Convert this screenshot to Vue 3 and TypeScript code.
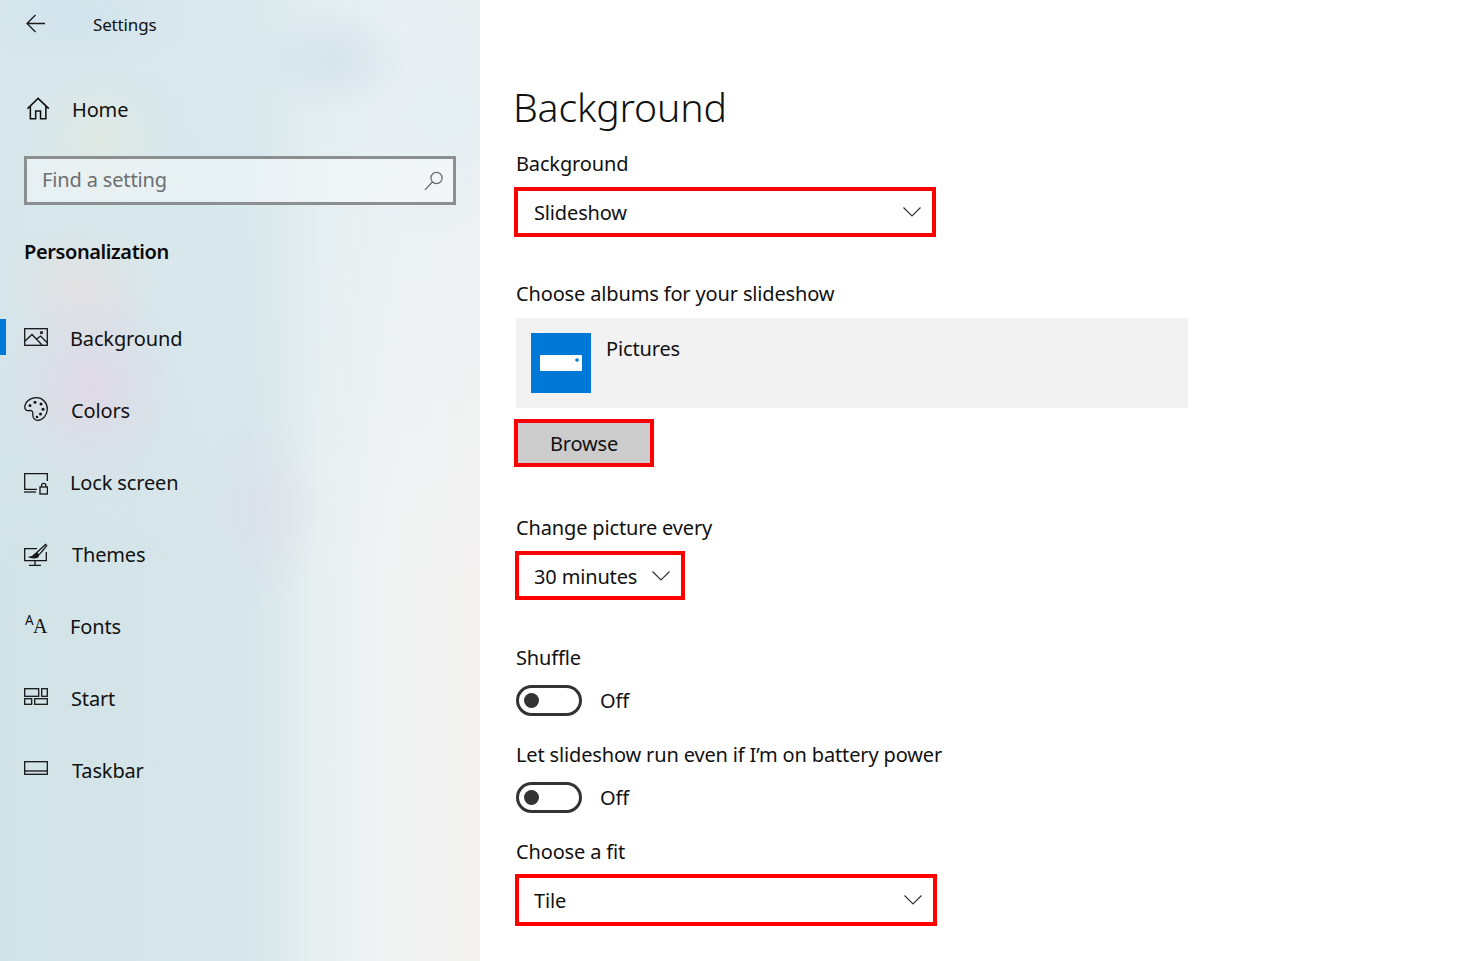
<script setup lang="ts">
const items: { name: string; icon: string; active?: boolean; nudge?: string }[] = [
  { name: 'Background', icon: 'bg', active: true },
  { name: 'Colors', icon: 'colors', nudge: 'n1' },
  { name: 'Lock screen', icon: 'lock' },
  { name: 'Themes', icon: 'themes', nudge: 'n2' },
  { name: 'Fonts', icon: 'fonts' },
  { name: 'Start', icon: 'start', nudge: 'n1' },
  { name: 'Taskbar', icon: 'taskbar', nudge: 'n2' },
]
</script>

<template>
  <div class="page">
    <aside class="side">
      <div class="top">
        <svg class="back" width="20" height="20" viewBox="0 0 20 20" fill="none" stroke="#1a1a1a" stroke-width="1.3">
          <path d="M1 9.5H19M9.5 1L1 9.5L9.5 18" />
        </svg>
        <span class="app-title">Settings</span>
      </div>
      <div class="home">
        <svg width="24" height="24" viewBox="0 0 24 24" fill="none" stroke="#111" stroke-width="1.6">
          <path d="M2 12.5L13 2L24 12.5M5 10V23H10.5V15H15.5V23H21V10" transform="translate(-1.5 -0.5) scale(0.97)" />
        </svg>
        <span>Home</span>
      </div>
      <div class="search">
        <span>Find a setting</span>
        <svg width="20" height="20" viewBox="0 0 20 20" fill="none" stroke="#666" stroke-width="1.2">
          <circle cx="12.5" cy="7" r="5.6" />
          <path d="M8.4 11L1 18.8" />
        </svg>
      </div>
      <div class="section">Personalization</div>
      <nav class="nav">
        <div v-for="item in items" :key="item.name" class="item" :class="[{ active: item.active }, item.nudge]">
          <svg class="ico" width="24" height="30" viewBox="0 0 24 30" fill="none" stroke="#151515" stroke-width="1.3">
            <template v-if="item.icon === 'bg'">
              <rect x="0.7" y="4.7" width="22.6" height="16.6" />
              <path d="M1 17L8 10.5L18 21M12 15.5L16.5 12L23 18.5" />
              <circle cx="17.5" cy="8.6" r="1" />
            </template>
            <template v-else-if="item.icon === 'colors'">
              <path d="M12.5 1.7C6 1.7 .8 6 .8 11.5C.8 13.5 3 15 5 14.6C7.5 14.2 9 15 8.8 17.5C8.6 20.5 9.5 24.3 13.5 24.3C19 24.3 23.3 19 23.3 13C23.3 6.6 18.5 1.7 12.5 1.7Z" />
              <g fill="#151515" stroke="none">
                <circle cx="6" cy="9.4" r="1.5" />
                <circle cx="11" cy="6.3" r="1.5" />
                <circle cx="17" cy="8" r="1.5" />
                <circle cx="19" cy="13.3" r="1.5" />
                <circle cx="16.5" cy="18" r="1.5" />
                <circle cx="13" cy="21" r="1.3" />
              </g>
            </template>
            <template v-else-if="item.icon === 'lock'">
              <path d="M13 21.3H.7V5.7H23.3V13" />
              <path d="M0 24H12" />
              <rect x="16" y="19" width="7.4" height="7" />
              <path d="M17.6 19V17.3C17.6 14.6 21.8 14.6 21.8 17.3V19" />
            </template>
            <template v-else-if="item.icon === 'themes'">
              <path d="M13 8.7H.7V20.7H22.3V12" />
              <path d="M11 21V25M5 25.3H17" />
              <path d="M21.5 4.5C19 7 14 11 12.5 13L14.5 15C17 13 20 9 22.7 5.5Z" />
              <path d="M12.5 13C9.5 14 10.5 16.3 6 17.2C9.5 18.5 14.5 18 14.5 15Z" fill="#151515" />
            </template>
            <template v-else-if="item.icon === 'fonts'">
              <foreignObject x="0" y="0" width="24" height="30">
                <div class="aa"><span class="a1">A</span><span class="a2">A</span></div>
              </foreignObject>
            </template>
            <template v-else-if="item.icon === 'start'">
              <rect x="0.7" y="4.7" width="14" height="7.6" />
              <rect x="17.7" y="4.7" width="5.6" height="7.6" />
              <rect x="0.7" y="14.7" width="7" height="5.6" />
              <rect x="10.7" y="14.7" width="12.6" height="5.6" />
            </template>
            <template v-else>
              <rect x="0.7" y="5.7" width="22.6" height="12.6" />
              <path d="M1 15H23" />
            </template>
          </svg>
          <span>{{ item.name }}</span>
        </div>
      </nav>
    </aside>

    <main class="main">
      <h1 class="title">Background</h1>

      <div class="label first">Background</div>
      <div class="select wide h50">
        <span>Slideshow</span>
        <svg width="18" height="10" viewBox="0 0 18 10" fill="none" stroke="#333" stroke-width="1.2"><path d="M.5 .5L9 9L17.5 .5" /></svg>
      </div>

      <div class="label l-albums">Choose albums for your slideshow</div>
      <div class="album">
        <div class="tile">
          <svg width="42" height="16" viewBox="0 0 42 16">
            <rect width="42" height="16" rx="1" fill="#fff" />
            <circle cx="37" cy="5" r="1.8" fill="#0078d7" />
          </svg>
        </div>
        <span>Pictures</span>
      </div>
      <div class="browse">Browse</div>

      <div class="label l-change">Change picture every</div>
      <div class="select small">
        <span>30 minutes</span>
        <svg width="18" height="10" viewBox="0 0 18 10" fill="none" stroke="#333" stroke-width="1.2"><path d="M.5 .5L9 9L17.5 .5" /></svg>
      </div>

      <div class="label l-shuffle">Shuffle</div>
      <div class="toggle-row">
        <span class="toggle"><i></i></span>
        <span>Off</span>
      </div>

      <div class="label l-after">Let slideshow run even if I’m on battery power</div>
      <div class="toggle-row">
        <span class="toggle"><i></i></span>
        <span>Off</span>
      </div>

      <div class="label l-after">Choose a fit</div>
      <div class="select wide2">
        <span>Tile</span>
        <svg width="18" height="10" viewBox="0 0 18 10" fill="none" stroke="#333" stroke-width="1.2"><path d="M.5 .5L9 9L17.5 .5" /></svg>
      </div>
    </main>
  </div>
</template>

<style scoped>
.page {
  display: flex;
  width: 1472px;
  height: 961px;
  overflow: hidden;
  background: #fff;
  color: #111;
  font-family: "Noto Sans", "Open Sans", sans-serif;
  font-size: 20px;
  letter-spacing: -0.15px;
}
.side {
  width: 480px;
  height: 961px;
  flex: none;
  box-sizing: border-box;
  background:
    radial-gradient(ellipse 80px 55px at 330px 60px, rgba(205, 221, 233, 0.6), rgba(205, 221, 233, 0)),
    radial-gradient(ellipse 130px 60px at 70px 15px, rgba(205, 223, 235, 0.6), rgba(205, 223, 235, 0)),
    radial-gradient(ellipse 90px 110px at 90px 385px, rgba(228, 212, 228, 0.7), rgba(228, 212, 228, 0)),
    radial-gradient(ellipse 80px 60px at 80px 285px, rgba(235, 222, 220, 0.6), rgba(235, 222, 220, 0)),
    radial-gradient(ellipse 60px 100px at 260px 510px, rgba(222, 220, 232, 0.5), rgba(222, 220, 232, 0)),
    radial-gradient(ellipse 70px 70px at 100px 140px, rgba(232, 234, 220, 0.5), rgba(232, 234, 220, 0)),
    radial-gradient(ellipse 130px 120px at 450px 120px, rgba(228, 238, 243, 0.8), rgba(228, 238, 243, 0)),
    linear-gradient(180deg, rgba(222, 236, 240, 0.55) 0, rgba(212, 228, 232, 0) 60%, rgba(198, 221, 227, 0) 70%),
    linear-gradient(90deg, #d2e3e7 0, #d6e6ea 250px, #e8eff0 320px, #f1f3f3 390px, #f4f3f2 480px);
}
.top {
  height: 50px;
  display: flex;
  align-items: center;
  padding-left: 26px;
}
.back {
  margin-top: -3px;
}
.app-title {
  margin-left: 47px;
  margin-top: -2px;
  font-size: 17px;
}
.home {
  height: 46px;
  margin-top: 36px;
  padding-left: 27px;
  display: flex;
  align-items: center;
  gap: 21px;
}
.search {
  margin: 24px 24px 0;
  height: 49px;
  box-sizing: border-box;
  border: 3px solid #8b8f8f;
  padding: 0 9px 2px 15px;
  display: flex;
  align-items: center;
  justify-content: space-between;
  color: #6a6f70;
  background: rgba(255, 255, 255, 0.4);
}
.search svg {
  margin-top: 2px;
}
.section {
  margin: 31px 0 0 24px;
  height: 32px;
  line-height: 32px;
  font-weight: 600;
  font-size: 20px;
  letter-spacing: -0.4px;
  color: #0a0a0a;
}
.nav {
  margin-top: 34px;
}
.item {
  position: relative;
  height: 72px;
  padding-left: 24px;
  display: flex;
  align-items: center;
  gap: 22px;
}
.n1 { gap: 23px; }
.n2 { gap: 24px; }
.item.active::before {
  content: "";
  position: absolute;
  left: 0;
  top: 17px;
  width: 6px;
  height: 36px;
  background: #0078d7;
}
.ico {
  flex: none;
  margin-top: 2px;
}
.aa {
  position: relative;
  width: 24px;
  height: 30px;
}
.a1 {
  position: absolute;
  left: 1px;
  top: -2px;
  letter-spacing: 0;
  font: 13.5px/20px "Noto Sans", sans-serif;
}
.a2 {
  position: absolute;
  left: 9px;
  top: 1px;
  letter-spacing: 0;
  font: 20px/26px "Liberation Serif", serif;
}
.main {
  flex: 1;
  padding: 84px 0 0 36px;
  box-sizing: border-box;
}
.title {
  margin: 0 0 0 -3px;
  padding-bottom: 2px;
  font-weight: 300;
  font-size: 39.2px;
  line-height: 46px;
  color: #111;
}
.label {
  height: 28px;
  line-height: 28px;
  white-space: nowrap;
}
.first { margin-top: 18px; }
.l-albums { margin-top: 43px; }
.l-change { margin-top: 47px; }
.l-shuffle { margin-top: 44px; }
.l-after { margin-top: 25px; }
.select {
  box-sizing: border-box;
  border: 4px solid #f00;
  background: #fff;
  display: flex;
  align-items: center;
  justify-content: space-between;
  padding: 0 11px 0 15px;
}
.wide {
  width: 422px;
  height: 50px;
  margin: 9px 0 0 -2px;
  padding-left: 16px;
}
.small {
  width: 170px;
  height: 49px;
  margin: 9px 0 0 -1px;
}
.small span {
  padding-top: 2px;
}
.wide2 {
  width: 422px;
  height: 52px;
  margin: 8px 0 0 -1px;
}
.album {
  margin-top: 10px;
  width: 672px;
  height: 90px;
  background: #f2f2f2;
  display: flex;
  padding: 15px;
  box-sizing: border-box;
  gap: 15px;
}
.album span {
  line-height: 32px;
}
.tile {
  width: 60px;
  height: 60px;
  background: #0078d7;
  display: flex;
  align-items: center;
  justify-content: center;
}
.browse {
  margin: 11px 0 0 -2px;
  width: 140px;
  height: 48px;
  box-sizing: border-box;
  border: 4px solid #f00;
  background: #ccc;
  display: flex;
  align-items: center;
  justify-content: center;
  padding-top: 1px;
}
.toggle-row {
  margin-top: 13px;
  height: 31px;
  display: flex;
  align-items: center;
  gap: 18px;
}
.toggle {
  width: 66px;
  height: 31px;
  box-sizing: border-box;
  border: 3px solid #333;
  border-radius: 16px;
  display: flex;
  align-items: center;
  padding-left: 5px;
}
.toggle i {
  width: 15px;
  height: 15px;
  border-radius: 50%;
  background: #333;
}
</style>
